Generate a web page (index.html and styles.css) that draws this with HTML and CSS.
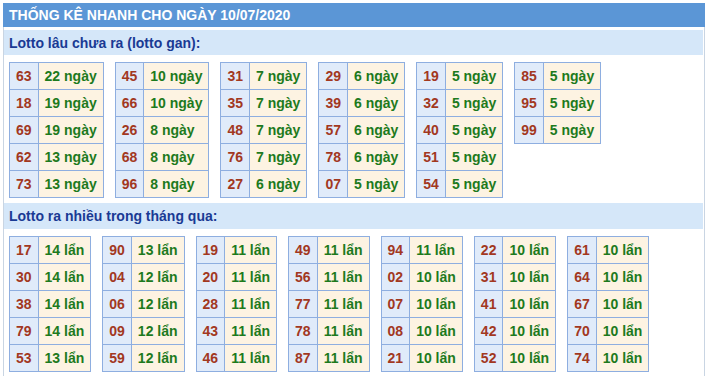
FILE: index.html
```html
<!DOCTYPE html>
<html lang="vi">
<head>
<meta charset="utf-8">
<title>Thống kê nhanh</title>
<link rel="stylesheet" href="styles.css">
</head>
<body>
<div class="box">
  <div class="title">THỐNG KÊ NHANH CHO NGÀY 10/07/2020</div>
  <div class="body">
    <div class="sub">Lotto lâu chưa ra (lotto gan):</div>
    <div class="grid">
      <table><tr><td class="n">63</td><td class="v">22 ngày</td></tr><tr><td class="n">18</td><td class="v">19 ngày</td></tr><tr><td class="n">69</td><td class="v">19 ngày</td></tr><tr><td class="n">62</td><td class="v">13 ngày</td></tr><tr><td class="n">73</td><td class="v">13 ngày</td></tr></table>
      <table><tr><td class="n">45</td><td class="v">10 ngày</td></tr><tr><td class="n">66</td><td class="v">10 ngày</td></tr><tr><td class="n">26</td><td class="v">8 ngày</td></tr><tr><td class="n">68</td><td class="v">8 ngày</td></tr><tr><td class="n">96</td><td class="v">8 ngày</td></tr></table>
      <table><tr><td class="n">31</td><td class="v">7 ngày</td></tr><tr><td class="n">35</td><td class="v">7 ngày</td></tr><tr><td class="n">48</td><td class="v">7 ngày</td></tr><tr><td class="n">76</td><td class="v">7 ngày</td></tr><tr><td class="n">27</td><td class="v">6 ngày</td></tr></table>
      <table><tr><td class="n">29</td><td class="v">6 ngày</td></tr><tr><td class="n">39</td><td class="v">6 ngày</td></tr><tr><td class="n">57</td><td class="v">6 ngày</td></tr><tr><td class="n">78</td><td class="v">6 ngày</td></tr><tr><td class="n">07</td><td class="v">5 ngày</td></tr></table>
      <table><tr><td class="n">19</td><td class="v">5 ngày</td></tr><tr><td class="n">32</td><td class="v">5 ngày</td></tr><tr><td class="n">40</td><td class="v">5 ngày</td></tr><tr><td class="n">51</td><td class="v">5 ngày</td></tr><tr><td class="n">54</td><td class="v">5 ngày</td></tr></table>
      <table><tr><td class="n">85</td><td class="v">5 ngày</td></tr><tr><td class="n">95</td><td class="v">5 ngày</td></tr><tr><td class="n">99</td><td class="v">5 ngày</td></tr></table>
    </div>
    <div class="sub">Lotto ra nhiều trong tháng qua:</div>
    <div class="grid">
      <table><tr><td class="n">17</td><td class="v">14 lẩn</td></tr><tr><td class="n">30</td><td class="v">14 lẩn</td></tr><tr><td class="n">38</td><td class="v">14 lẩn</td></tr><tr><td class="n">79</td><td class="v">14 lẩn</td></tr><tr><td class="n">53</td><td class="v">13 lẩn</td></tr></table>
      <table><tr><td class="n">90</td><td class="v">13 lẩn</td></tr><tr><td class="n">04</td><td class="v">12 lẩn</td></tr><tr><td class="n">06</td><td class="v">12 lẩn</td></tr><tr><td class="n">09</td><td class="v">12 lẩn</td></tr><tr><td class="n">59</td><td class="v">12 lẩn</td></tr></table>
      <table><tr><td class="n">19</td><td class="v">11 lẩn</td></tr><tr><td class="n">20</td><td class="v">11 lẩn</td></tr><tr><td class="n">28</td><td class="v">11 lẩn</td></tr><tr><td class="n">43</td><td class="v">11 lẩn</td></tr><tr><td class="n">46</td><td class="v">11 lẩn</td></tr></table>
      <table><tr><td class="n">49</td><td class="v">11 lẩn</td></tr><tr><td class="n">56</td><td class="v">11 lẩn</td></tr><tr><td class="n">77</td><td class="v">11 lẩn</td></tr><tr><td class="n">78</td><td class="v">11 lẩn</td></tr><tr><td class="n">87</td><td class="v">11 lẩn</td></tr></table>
      <table><tr><td class="n">94</td><td class="v">11 lẩn</td></tr><tr><td class="n">02</td><td class="v">10 lẩn</td></tr><tr><td class="n">07</td><td class="v">10 lẩn</td></tr><tr><td class="n">08</td><td class="v">10 lẩn</td></tr><tr><td class="n">21</td><td class="v">10 lẩn</td></tr></table>
      <table><tr><td class="n">22</td><td class="v">10 lẩn</td></tr><tr><td class="n">31</td><td class="v">10 lẩn</td></tr><tr><td class="n">41</td><td class="v">10 lẩn</td></tr><tr><td class="n">42</td><td class="v">10 lẩn</td></tr><tr><td class="n">52</td><td class="v">10 lẩn</td></tr></table>
      <table><tr><td class="n">61</td><td class="v">10 lẩn</td></tr><tr><td class="n">64</td><td class="v">10 lẩn</td></tr><tr><td class="n">67</td><td class="v">10 lẩn</td></tr><tr><td class="n">70</td><td class="v">10 lẩn</td></tr><tr><td class="n">74</td><td class="v">10 lẩn</td></tr></table>
    </div>
  </div>
</div>
</body>
</html>
```

FILE: styles.css
```css
html, body {
  margin: 0;
  padding: 0;
  background: #ffffff;
}
body {
  font-family: "Liberation Sans", Arial, sans-serif;
  font-weight: bold;
  font-size: 14px;
}
.box {
  margin: 3px 0 0 3px;
  width: 702px;
}
.title {
  background: #5b96d6;
  color: #ffffff;
  height: 24px;
  line-height: 25px;
  padding-left: 6px;
}
.body {
  border-left: 1px solid #c9d5e3;
  border-right: 1px solid #c9d5e3;
  padding: 3px 1px 0 0;
  height: 360px;
}
.sub {
  background: #d5e7f9;
  color: #1a3a94;
  height: 25px;
  line-height: 26px;
  padding-left: 5px;
}
.grid {
  display: flex;
  align-items: flex-start;
  gap: 11px;
  padding: 7px 0 5px 5px;
}
.grid + .sub {
  height: 26px;
}
table {
  border-collapse: collapse;
  border: 1px solid #8eaee0;
}
td {
  border: 1px solid #8eaee0;
  padding: 0 6px;
  height: 26px;
  line-height: 26px;
  white-space: nowrap;
}
td.n {
  background: #e0ebfa;
  color: #a2381f;
}
td.v {
  background: #fdf3e2;
  color: #1d7a1d;
}
```
